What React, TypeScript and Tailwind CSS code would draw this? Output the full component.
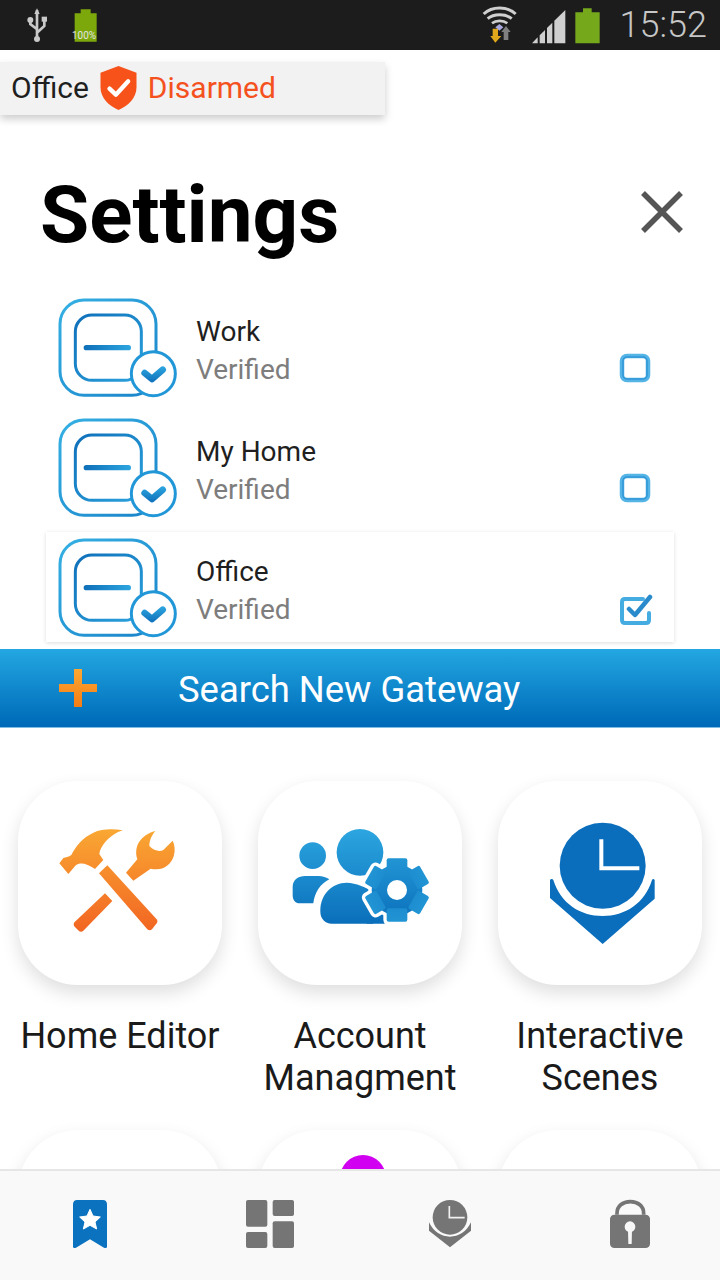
const gateways = [
  { name: "Work", checked: false },
  { name: "My Home", checked: false },
  { name: "Office", checked: true },
];

function UsbIcon() {
  return (
    <svg className="ml-[27px] h-[50px] w-[20px]" viewBox="80 0 60 150" fill="none">
      <path d="M110 30V118M110 88L90 72V60M110 98L132 78V58" stroke="#c9c9c9" strokeWidth="8" />
      <path d="M110 25L118 42H102Z" fill="#c9c9c9" />
      <circle cx="90" cy="60" r="9" fill="#c9c9c9" />
      <rect x="124" y="50" width="17" height="15" fill="#c9c9c9" />
      <circle cx="110" cy="117" r="9" fill="#c9c9c9" />
    </svg>
  );
}

function SmallBattery() {
  return (
    <div className="relative ml-[27px] h-[50px] w-[24px]">
      <svg className="h-[50px] w-[24px]" viewBox="220 0 72 150">
        <path d="M240 28H270V40H288V125H222V40H240Z" fill="#7da80c" />
      </svg>
      <span className="absolute left-[-2px] top-[29px] text-[10px] leading-[14px] text-[#e2e2e2]">100%</span>
    </div>
  );
}

function WifiIcon() {
  return (
    <svg className="h-[50px] w-[36px]" viewBox="70 0 108 150" fill="none">
      <path d="M75 42C100 18 146 18 171 42" stroke="#cfcfcf" strokeWidth="9" />
      <path d="M87 56C105 40 141 40 159 56" stroke="#cfcfcf" strokeWidth="9" />
      <path d="M100 70C112 60 134 60 146 70" stroke="#cfcfcf" strokeWidth="8" />
      <path d="M110 82L122 72L134 82L122 92Z" fill="#a9a9e0" />
      <path d="M102 86H118V108H128L110 128L95 108H102Z" fill="#e0a81a" />
      <path d="M142 78L156 96H149V120H135V96H128Z" fill="#808080" />
    </svg>
  );
}

function SignalIcon() {
  return (
    <svg className="ml-[14px] h-[50px] w-[34px]" viewBox="215 0 102 150" fill="#cfcfcf">
      <path d="M215 130L232 112V130Z" />
      <path d="M238 106L254 90V130H238Z" />
      <path d="M260 84L276 68V130H260Z" />
      <path d="M282 62L315 30V130H282Z" />
    </svg>
  );
}

function BigBattery() {
  return (
    <svg className="ml-[9px] h-[50px] w-[26px]" viewBox="344 0 78 150">
      <path d="M368 25H394V37H418V130H345V37H368Z" fill="#76a81c" />
    </svg>
  );
}

function StatusBar() {
  return (
    <div className="flex h-[50px] shrink-0 items-center bg-[#1c1c1c]">
      <UsbIcon />
      <SmallBattery />
      <div className="ml-auto flex items-center pr-[13px]">
        <WifiIcon />
        <SignalIcon />
        <BigBattery />
        <span className="ml-[19px] text-[36px] font-light leading-[50px] text-[#c6c6c6]">15:52</span>
      </div>
    </div>
  );
}

function ShieldIcon() {
  return (
    <svg className="ml-[11px] mr-[11px] h-[44px] w-[37px] shrink-0" viewBox="303 198 108 132" fill="none">
      <path
        d="M357 198L411 218V262C411 295 385 318 357 330C329 318 303 295 303 262V218Z"
        fill="#f6521a"
      />
      <path d="M330 266L349 284L386 244" stroke="#fff" strokeWidth="13" strokeLinecap="round" strokeLinejoin="round" />
    </svg>
  );
}

function GatewayIcon() {
  return (
    <svg className="h-[110px] w-[130px] shrink-0" viewBox="30 7 390 330" fill="none">
      <defs>
        <linearGradient id="gw-outer" x1="0" y1="0" x2="1" y2="1">
          <stop offset="0" stopColor="#35b0e3" />
          <stop offset="1" stopColor="#1a84c9" />
        </linearGradient>
        <linearGradient id="gw-inner" x1="0" y1="0" x2="1" y2="1">
          <stop offset="0" stopColor="#0f70ba" />
          <stop offset="1" stopColor="#2ba2dd" />
        </linearGradient>
        <linearGradient id="gw-bar" gradientUnits="userSpaceOnUse" x1="132" y1="0" x2="272" y2="0">
          <stop offset="0" stopColor="#0e6fb9" />
          <stop offset="1" stopColor="#2da5df" />
        </linearGradient>
        <linearGradient id="gw-check" gradientUnits="userSpaceOnUse" x1="0" y1="232" x2="0" y2="278">
          <stop offset="0" stopColor="#2da5df" />
          <stop offset="1" stopColor="#0f70ba" />
        </linearGradient>
      </defs>
      <rect x="60" y="31" width="288" height="286" rx="72" stroke="url(#gw-outer)" strokeWidth="9" />
      <rect x="106" y="76" width="198" height="196" rx="50" stroke="url(#gw-inner)" strokeWidth="9" />
      <path d="M139 174H265" stroke="url(#gw-bar)" strokeWidth="16" strokeLinecap="round" />
      <circle cx="340" cy="252" r="66" fill="#fff" stroke="#2297d8" strokeWidth="9" />
      <path d="M314 250L336 268L368 240" stroke="url(#gw-check)" strokeWidth="20" strokeLinecap="round" strokeLinejoin="round" />
    </svg>
  );
}

function CheckBox({ checked }: { checked: boolean }) {
  return (
    <svg className="h-[36px] w-[36px] shrink-0" viewBox="0 0 36 36" fill="none">
      {checked ? (
        <>
          <path
            d="M26 8H8C6 8 5 9 5 11V29C5 31 6 32 8 32H29C31 32 32 31 32 29V22"
            stroke="#45ace2"
            strokeWidth="4"
            strokeLinecap="round"
          />
          <path d="M12 18L18 24L33 6" stroke="#2a8bcc" strokeWidth="4.5" strokeLinecap="round" strokeLinejoin="round" />
        </>
      ) : (
        <>
          <rect x="5" y="5" width="26" height="24" rx="5" stroke="#55b4e6" strokeWidth="4.5" />
          <rect x="6" y="6" width="24" height="22" rx="4" stroke="#3197d6" strokeWidth="1.5" />
        </>
      )}
    </svg>
  );
}

function GatewayRow({ name, checked }: { name: string; checked: boolean }) {
  return (
    <div
      className={
        checked
          ? "flex h-[110px] items-center bg-white pl-[4px] pr-[21px] shadow-[0_1px_4px_rgba(0,0,0,0.14)]"
          : "flex h-[110px] items-center pl-[4px] pr-[21px]"
      }
    >
      <GatewayIcon />
      <div className="ml-[16px] flex flex-col pt-[8px]">
        <span className="text-[28px] leading-[38px] text-[#1f1f1f]">{name}</span>
        <span className="text-[28px] leading-[38px] text-[#7d7d7d]">Verified</span>
      </div>
      <div className="ml-auto mt-[44px]">
        <CheckBox checked={checked} />
      </div>
    </div>
  );
}

function HammerIcon() {
  return (
    <svg className="h-[204px] w-[204px]" viewBox="54 33 612 612">
      <defs>
        <linearGradient id="tools" gradientUnits="userSpaceOnUse" x1="0" y1="180" x2="0" y2="485">
          <stop offset="0" stopColor="#f9a733" />
          <stop offset="1" stopColor="#f26522" />
        </linearGradient>
      </defs>
      <g fill="url(#tools)">
        <path d="M368 181C340 176 305 176 280 188C250 202 228 226 214 255C206 262 196 262 190 264L178 280L205 312L228 285C240 276 262 280 285 297L310 270L298 252C300 232 325 195 368 181Z" />
        <path d="M297 310L322 286L470 448C473 452 473 456 470 460L456 478C452 482 446 482 442 478Z" />
        <path d="M315 370L337 393L250 482C246 486 240 486 236 482L224 470C220 466 220 460 224 456Z" />
        <path d="M466 183C422 195 400 228 412 268L378 308L400 332L452 296C484 304 514 288 522 255C526 240 524 225 518 212L490 240C478 246 462 242 448 228C448 210 456 195 466 183Z" />
      </g>
    </svg>
  );
}

function Gear({ halo }: { halo?: boolean }) {
  const props = halo
    ? { fill: "#fff", stroke: "#fff", strokeWidth: 20 }
    : { fill: "url(#people)" };
  return (
    <g {...props}>
      <circle cx="441" cy="360" r="76" />
      {[0, 60, 120, 180, 240, 300].map((deg) => (
        <rect key={deg} x="410" y="265" width="62" height="40" rx="6" transform={`rotate(${deg} 441 360)`} />
      ))}
    </g>
  );
}

function AccountIcon() {
  return (
    <svg className="h-[204px] w-[204px]" viewBox="24 33 612 612">
      <defs>
        <linearGradient id="people" gradientUnits="userSpaceOnUse" x1="0" y1="175" x2="0" y2="465">
          <stop offset="0" stopColor="#2ca6e0" />
          <stop offset="1" stopColor="#0a6eba" />
        </linearGradient>
      </defs>
      <circle cx="188" cy="257" r="40" fill="url(#people)" />
      <path d="M128 350C128 330 145 318 165 318H205C218 318 230 322 238 328C210 342 194 368 190 400H150C135 400 128 390 128 375Z" fill="url(#people)" />
      <circle cx="330" cy="247" r="70" fill="url(#people)" />
      <path d="M211 420C211 375 245 338 290 338C320 340 345 350 370 365V461H245C225 461 211 445 211 425Z" fill="url(#people)" />
      <path d="M370 440H420V470H370Z" fill="#fff" />
      <path d="M350 400H400L404 461H350Z" fill="url(#people)" />
      <Gear halo />
      <Gear />
      <circle cx="441" cy="360" r="30" fill="#fff" />
    </svg>
  );
}

function ScenesIcon() {
  return (
    <svg className="h-[204px] w-[204px]" viewBox="24 33 612 612">
      <circle cx="338" cy="287" r="129" fill="#0a6ebd" />
      <path d="M334 208V295H448" fill="none" stroke="#fff" strokeWidth="12" />
      <path
        d="M180 330C182 326 188 326 190 330C212 400 270 438 338 438C406 438 464 400 486 330C488 326 492 326 494 330V386L338 522L180 384Z"
        fill="#0a6ebd"
      />
    </svg>
  );
}

function Tile({ children }: { children?: React.ReactNode }) {
  return (
    <div className="h-[204px] rounded-[60px] bg-white shadow-[0_8px_18px_rgba(0,0,0,0.13)]">{children}</div>
  );
}

function BookmarkNav() {
  return (
    <svg className="h-[60px] w-[60px]" viewBox="180 225 180 180">
      <path
        d="M231 240H309C316 240 321 245 321 252V380C321 384 316 385 312 383L270 358L228 383C224 385 219 384 219 380V252C219 245 224 240 231 240Z"
        fill="#0a72bf"
      />
      <path
        d="M270 268L279 288L301 291L285 306L290 327L270 316L250 327L255 306L239 291L261 288Z"
        fill="#fff"
        stroke="#fff"
        strokeWidth="3"
        strokeLinejoin="round"
      />
    </svg>
  );
}

function GridNav() {
  return (
    <svg className="h-[60px] w-[60px]" viewBox="720 225 180 180" fill="#757575">
      <rect x="738" y="240" width="64" height="80" rx="6" />
      <rect x="818" y="240" width="64" height="48" rx="6" />
      <rect x="738" y="336" width="64" height="48" rx="6" />
      <rect x="818" y="304" width="64" height="80" rx="6" />
    </svg>
  );
}

function ClockNav() {
  return (
    <svg className="h-[60px] w-[60px]" viewBox="180 225 180 180">
      <circle cx="270" cy="292" r="52" fill="#757575" />
      <path d="M268 258V293H314" fill="none" stroke="#f1f1f1" strokeWidth="5" />
      <path
        d="M207 307C220 335 245 350 270 350C295 350 320 335 333 307V332L270 382L207 332Z"
        fill="#757575"
      />
    </svg>
  );
}

function LockNav() {
  return (
    <svg className="h-[60px] w-[60px]" viewBox="720 225 180 180">
      <path d="M771 284V280C771 258 788 245 811 245C834 245 851 258 851 280V284" fill="none" stroke="#757575" strokeWidth="11" />
      <rect x="750" y="284" width="120" height="100" rx="13" fill="#757575" />
      <circle cx="810" cy="320" r="16" fill="#f7f7f7" />
      <path d="M804 326H816L815 372H805Z" fill="#f7f7f7" />
    </svg>
  );
}

export default function App() {
  return (
    <div className="flex h-[1280px] w-[720px] flex-col overflow-hidden bg-white font-[Roboto,sans-serif]">
      <StatusBar />

      <div className="flex min-h-0 flex-1 flex-col overflow-hidden">
        <div className="mt-[12px] flex h-[53px] w-[385px] shrink-0 items-center bg-[#f2f2f2] pb-[2px] pl-[11px] shadow-[0_4px_8px_rgba(0,0,0,0.2)]">
          <span className="text-[30px] leading-none text-[#1f1f1f]">Office</span>
          <ShieldIcon />
          <span className="text-[30px] leading-none text-[#f4511e]">Disarmed</span>
        </div>

        <div className="mt-[45px] flex h-[110px] shrink-0 items-center justify-between pl-[40px] pr-[37px]">
          <h1 className="text-[80px] font-bold leading-none text-black">Settings</h1>
          <svg className="mb-[6px] h-[42px] w-[42px]" viewBox="0 0 42 42" fill="none">
            <path d="M2 2L40 40M40 2L2 40" stroke="#555" strokeWidth="5.5" />
          </svg>
        </div>

        <div className="mx-[46px] mt-[22px] flex shrink-0 flex-col gap-[10px]">
          {gateways.map((g) => (
            <GatewayRow key={g.name} name={g.name} checked={g.checked} />
          ))}
        </div>

        <div className="mt-[7px] flex h-[79px] shrink-0 items-center border-b border-[#7fbde6] bg-gradient-to-b from-[#23a7e1] to-[#0069b8] pl-[58px]">
          <svg className="h-[40px] w-[40px]" viewBox="0 0 40 40">
            <defs>
              <linearGradient id="plus" x1="0" y1="0" x2="0" y2="1">
                <stop offset="0" stopColor="#fba833" />
                <stop offset="1" stopColor="#f57c14" />
              </linearGradient>
            </defs>
            <path d="M16 1H24V16H39V24H24V39H16V24H1V16H16Z" fill="url(#plus)" />
          </svg>
          <span className="ml-[80px] pt-[5px] text-[36.4px] leading-none text-white">Search New Gateway</span>
        </div>

        <div className="grid grid-cols-3 gap-x-[36px] gap-y-[31px] px-[18px] pt-[53px]">
          <div>
            <Tile>
              <HammerIcon />
            </Tile>
            <p className="mt-[30px] text-center text-[36px] leading-[42px] text-[#1a1a1a]">Home Editor</p>
          </div>
          <div>
            <Tile>
              <AccountIcon />
            </Tile>
            <p className="mt-[30px] text-center text-[36px] leading-[42px] text-[#1a1a1a]">
              Account
              <br />
              Managment
            </p>
          </div>
          <div>
            <Tile>
              <ScenesIcon />
            </Tile>
            <p className="mt-[30px] text-center text-[36px] leading-[42px] text-[#1a1a1a]">
              Interactive
              <br />
              Scenes
            </p>
          </div>
          <Tile />
          <Tile>
            <div className="ml-[82px] h-[46px] w-[46px] translate-y-[25px] rounded-full bg-[#d100f0]" />
          </Tile>
          <Tile />
        </div>
      </div>

      <nav className="grid h-[111px] shrink-0 grid-cols-4 border-t-2 border-[#e6e6e6] bg-[#f9f9f9] pb-[2px]">
        <div className="flex items-center justify-center">
          <BookmarkNav />
        </div>
        <div className="flex items-center justify-center">
          <GridNav />
        </div>
        <div className="flex items-center justify-center">
          <ClockNav />
        </div>
        <div className="flex items-center justify-center">
          <LockNav />
        </div>
      </nav>
    </div>
  );
}
